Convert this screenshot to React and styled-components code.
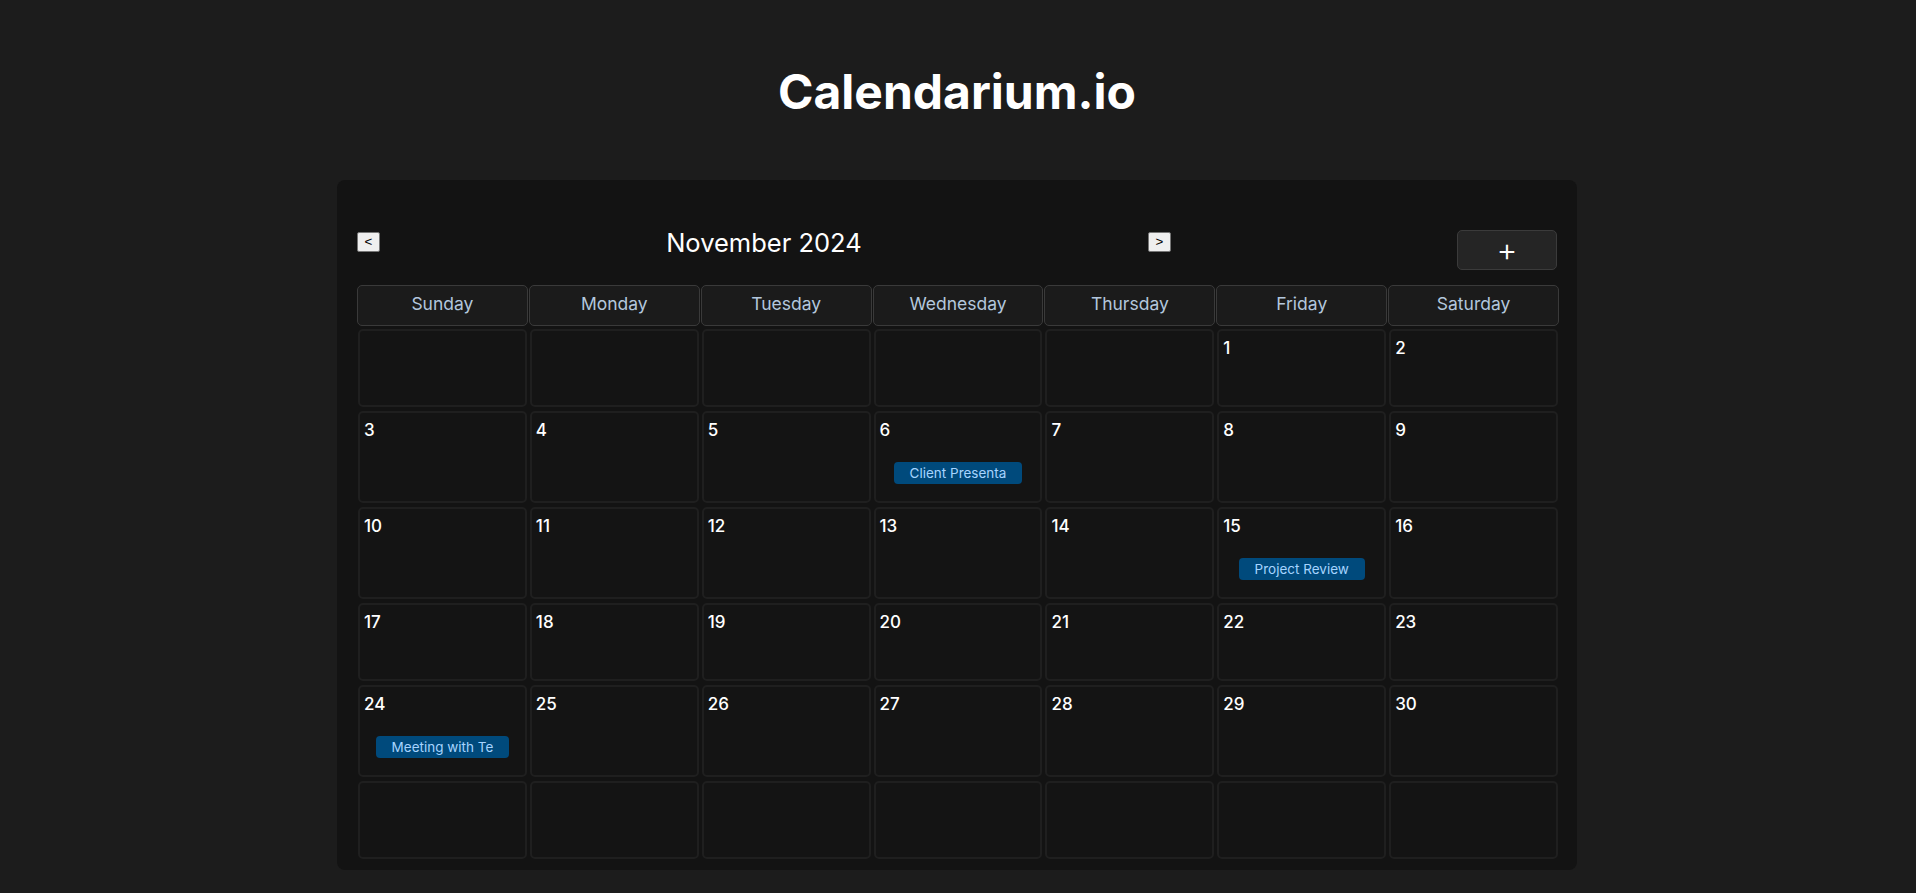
import React from "react";
import styled, { createGlobalStyle } from "styled-components";

const GlobalStyle = createGlobalStyle`
  html, body {
    margin: 0;
    padding: 0;
    background: #1c1c1c;
  }
  body {
    font-family: Inter, "Noto Sans", "Liberation Sans", sans-serif;
    color: #ffffff;
  }
  * { box-sizing: border-box; }
`;

const Page = styled.div`
  min-height: 893px;
  display: flex;
  flex-direction: column;
  align-items: center;
  padding-right: 2px;
`;

const Brand = styled.h1`
  margin: 63px 0 59px;
  font-size: 48px;
  line-height: 58px;
  font-weight: 700;
  color: #ffffff;
  letter-spacing: 0;
`;

const Panel = styled.section`
  width: 1240px;
  background: #131313;
  border-radius: 8px;
  padding: 50px 18px 10px 20px;
`;

const Toolbar = styled.div`
  display: flex;
  justify-content: space-between;
  align-items: flex-start;
  padding-right: 2px;
  margin-bottom: 15px;
`;

const NavButton = styled.button`
  width: 23px;
  height: 20px;
  margin-top: 2px;
  padding: 0;
  border: 1px solid #767676;
  border-radius: 2px;
  background: #efefef;
  color: #000;
  font-family: "Liberation Sans", Arial, sans-serif;
  font-size: 13.33px;
  line-height: 16px;
  cursor: pointer;
`;

const MonthTitle = styled.h2`
  margin: 2px 0 0;
  height: 20px;
  display: flex;
  align-items: center;
  font-size: 25.5px;
  font-weight: 400;
  color: #ffffff;
  white-space: nowrap;
`;

const AddButton = styled.button`
  width: 100px;
  height: 40px;
  padding: 0;
  background: #252525;
  border: 1px solid #3b3b3b;
  border-radius: 5px;
  color: #ffffff;
  font-family: Inter, sans-serif;
  font-size: 32px;
  font-weight: 300;
  line-height: 36px;
  cursor: pointer;
`;

const Grid = styled.div`
  display: grid;
  grid-template-columns: repeat(7, 1fr);
  column-gap: 1px;
  row-gap: 2px;
`;

const WeekdayCell = styled.div`
  height: 41px;
  padding: 7px 0 10px;
  border: 1px solid #3a3a3a;
  border-radius: 5px;
  background: #1b1b1b;
  color: #b3c7dd;
  font-size: 17.5px;
  line-height: 22px;
  text-align: center;
`;

const DayCell = styled.div`
  margin: 1px;
  min-height: 78px;
  padding: 5px 4px 4px;
  border: 2px solid #1f1f1f;
  border-radius: 5px;
  background: #141414;
  display: flex;
  flex-direction: column;
`;

const DayNumber = styled.span`
  font-size: 17px;
  line-height: 25px;
  font-weight: 500;
  color: #ffffff;
`;

const EventRow = styled.div`
  display: flex;
  justify-content: center;
  margin: 19px 0 13px;
`;

const EventPill = styled.div`
  padding: 3px 16px;
  background: #004a7c;
  color: #a6d4ff;
  border-radius: 4px;
  font-size: 13.5px;
  line-height: 16px;
  white-space: nowrap;
`;

const WEEKDAYS = ["Sunday", "Monday", "Tuesday", "Wednesday", "Thursday", "Friday", "Saturday"];

const EVENTS = {
  6: "Client Presentation",
  15: "Project Review",
  24: "Meeting with Team",
};

export default function App() {
  const firstDay = 5;
  const daysInMonth = 30;
  const cells = Array.from({ length: 42 }, (_, i) => {
    const d = i - firstDay + 1;
    return d >= 1 && d <= daysInMonth ? d : null;
  });

  return (
    <>
      <GlobalStyle />
      <Page>
        <Brand>Calendarium.io</Brand>
        <Panel>
          <Toolbar>
            <NavButton>&lt;</NavButton>
            <MonthTitle>November 2024</MonthTitle>
            <NavButton>&gt;</NavButton>
            <AddButton>+</AddButton>
          </Toolbar>
          <Grid>
            {WEEKDAYS.map((w) => (
              <WeekdayCell key={w}>{w}</WeekdayCell>
            ))}
            {cells.map((d, i) => (
              <DayCell key={i}>
                {d && <DayNumber>{d}</DayNumber>}
                {d && EVENTS[d] && (
                  <EventRow>
                    <EventPill>{EVENTS[d].substring(0, 15)}</EventPill>
                  </EventRow>
                )}
              </DayCell>
            ))}
          </Grid>
        </Panel>
      </Page>
    </>
  );
}
